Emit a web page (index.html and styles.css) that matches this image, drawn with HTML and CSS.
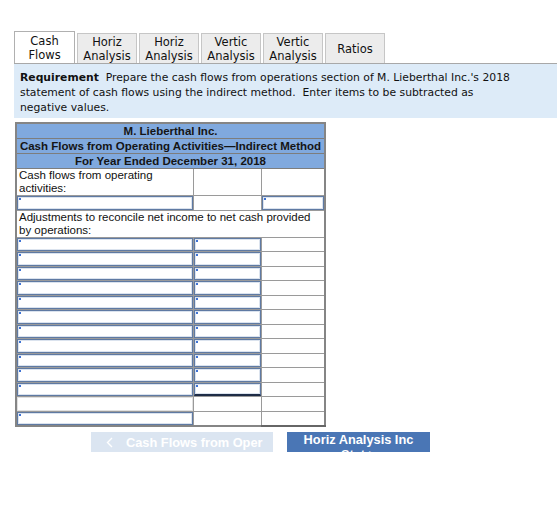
FILE: index.html
```html
<!DOCTYPE html>
<html>
<head>
    <title>Cash Flows - M. Lieberthal Inc.</title>
    <link rel="stylesheet" href="styles.css">
</head>
<body>
    <div class="page">
        <div class="tabs">
            <div class="tab active">Cash<br>Flows</div>
            <div class="tab">Horiz<br>Analysis</div>
            <div class="tab">Horiz<br>Analysis</div>
            <div class="tab">Vertic<br>Analysis</div>
            <div class="tab">Vertic<br>Analysis</div>
            <div class="tab">Ratios</div>
        </div>

        <div class="requirement">
            <b>Requirement</b>&nbsp; Prepare the cash flows from operations section of M. Lieberthal Inc.'s 2018<br>
            statement of cash flows using the indirect method.&nbsp; Enter items to be subtracted as<br>
            negative values.
        </div>

        <table class="statement">
            <colgroup>
                <col class="c1">
                <col class="c2">
                <col class="c3">
            </colgroup>
            <tr><th colspan="3">M. Lieberthal Inc.</th></tr>
            <tr><th colspan="3">Cash Flows from Operating Activities—Indirect Method</th></tr>
            <tr><th colspan="3">For Year Ended December 31, 2018</th></tr>
            <tr class="label">
                <td>Cash flows from operating activities:</td>
                <td></td>
                <td></td>
            </tr>
            <tr>
                <td><input type="text"></td>
                <td></td>
                <td><input type="text"></td>
            </tr>
            <tr class="label">
                <td colspan="3">Adjustments to reconcile net income to net cash provided by operations:</td>
            </tr>
            <tr><td><input type="text"></td><td><input type="text"></td><td></td></tr>
            <tr><td><input type="text"></td><td><input type="text"></td><td></td></tr>
            <tr><td><input type="text"></td><td><input type="text"></td><td></td></tr>
            <tr><td><input type="text"></td><td><input type="text"></td><td></td></tr>
            <tr><td><input type="text"></td><td><input type="text"></td><td></td></tr>
            <tr><td><input type="text"></td><td><input type="text"></td><td></td></tr>
            <tr><td><input type="text"></td><td><input type="text"></td><td></td></tr>
            <tr><td><input type="text"></td><td><input type="text"></td><td></td></tr>
            <tr><td><input type="text"></td><td><input type="text"></td><td></td></tr>
            <tr><td><input type="text"></td><td><input type="text"></td><td></td></tr>
            <tr><td><input type="text"></td><td><input type="text" class="subtotal"></td><td></td></tr>
            <tr class="blank">
                <td><div class="empty"></div></td>
                <td></td>
                <td class="dotted"></td>
            </tr>
            <tr>
                <td><input type="text"></td>
                <td></td>
                <td class="total"></td>
            </tr>
        </table>

        <div class="nav">
            <button class="prev">
                <svg width="7" height="11" viewBox="0 0 7 11"><path d="M6 1 L1.5 5.5 L6 10" fill="none" stroke="#fff" stroke-width="1.4"/></svg>
                Cash Flows from Oper
            </button>
            <button class="next">Horiz Analysis Inc<br>Stat &gt;</button>
        </div>
    </div>
</body>
</html>
```

FILE: styles.css
```css
body {
    margin: 0;
    background: #fff;
    color: #111;
    font-family: "DejaVu Sans", Verdana, sans-serif;
}
.page {
    padding: 31px 3px 0 14px;
}
.tabs {
    display: flex;
    gap: 2px;
    align-items: flex-end;
    height: 32px;
    border-bottom: 1px solid #a8a8a8;
}
.tab {
    width: 60px;
    height: 30px;
    box-sizing: border-box;
    border: 1px solid #c6c6c6;
    border-bottom: none;
    background: #ececec;
    font-size: 11.5px;
    line-height: 14px;
    text-align: center;
    display: flex;
    align-items: center;
    justify-content: center;
}
.tab.active {
    width: 61px;
    height: 32px;
    background: #fff;
    border-color: #b0b0b0;
}
.requirement {
    background: #ddebf8;
    padding: 6px 6px 3px 6px;
    font-size: 10.8px;
    line-height: 15px;
    white-space: nowrap;
}
.statement {
    margin-top: 4px;
    margin-left: 1px;
    border-collapse: collapse;
    border: 2px solid #858585;
    font-family: "Liberation Sans", Arial, sans-serif;
    font-size: 11.5px;
    table-layout: fixed;
    width: 309px;
}
.c1 { width: 177px; }
.c2 { width: 68px; }
.c3 { width: 64px; }
.statement th {
    background: #80a9de;
    border: 1px solid #7d7d7d;
    height: 14px;
    padding: 0;
    line-height: 13px;
    font-weight: bold;
    color: #151515;
}
.statement td {
    border: 1px solid #9a9a9a;
    padding: 0;
    height: 13.5px;
    background: #fff;
}
.label td {
    line-height: 13px;
    padding: 0 2px;
    vertical-align: top;
}
.statement input {
    display: block;
    width: 100%;
    height: 13.5px;
    box-sizing: border-box;
    margin: 0;
    padding: 0;
    border: 1px solid #5f7aa3;
    box-shadow: inset 0 0 0 1px #dbe3ee;
    background: linear-gradient(#3f73d4, #3f73d4) no-repeat 1px 1px / 2px 2px, #fff;
}
.statement input.subtotal {
    border-bottom: 2px solid #1e2c46;
}
.empty {
    height: 13.5px;
    box-sizing: border-box;
    border: 1px solid #e0e0e0;
}
.dotted {
    border-bottom: 1px dotted #000 !important;
}
.total {
    border-bottom: 2px solid #666 !important;
}
.nav {
    display: flex;
    gap: 14px;
    margin-top: 5px;
    padding-left: 77px;
}
.nav button {
    height: 20px;
    border: none;
    padding: 0;
    color: #fff;
    font-family: "Liberation Sans", Arial, sans-serif;
    font-weight: bold;
    font-size: 12.8px;
}
.prev {
    width: 182px;
    background: #dbe5f1;
    display: flex;
    align-items: center;
    gap: 13px;
    padding-left: 15px !important;
}
.next {
    width: 143px;
    background: #4a76b5;
    line-height: 15px;
    overflow: hidden;
    text-align: center;
    vertical-align: top;
}
```
